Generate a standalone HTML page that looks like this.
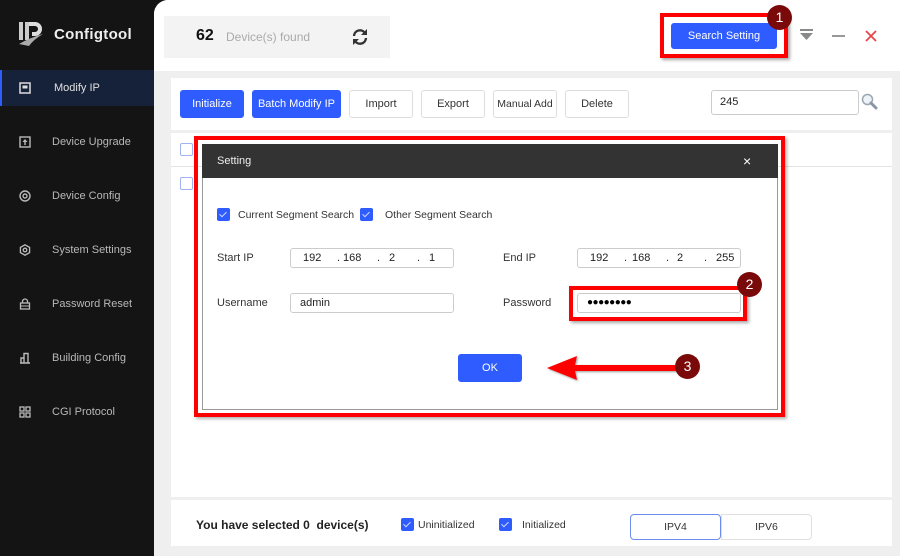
<!DOCTYPE html>
<html><head><meta charset="utf-8"><style>
*{margin:0;padding:0;box-sizing:border-box}
body{width:900px;height:556px;overflow:hidden;background:#141414;font-family:"Liberation Sans",sans-serif;position:relative;font-size:11px;color:#333}
.a{position:absolute}
.side{left:0;top:0;width:154px;height:556px;background:#141414}
.nav{left:0;width:154px;height:36px;color:#b8b8b8;font-size:11px;line-height:36px;padding-left:52px}
.nav .ic{position:absolute;left:19px;top:12px;width:12px;height:12px}
.main{left:154px;top:0;width:746px;height:556px;background:#efefef;border-top-left-radius:14px;overflow:hidden}
.btn{position:absolute;height:28px;border-radius:3px;font-size:11px;line-height:26px;text-align:center;border:1px solid #ddd;background:#fff;color:#333}
.btn.b{background:#2f5cff;border-color:#2f5cff;color:#fff}
.cb{position:absolute;width:13px;height:13px;background:#2f5cff;border-radius:2px}
.cb:after{content:"";position:absolute;left:4px;top:2px;width:3px;height:6px;border:solid #cfd8ff;border-width:0 1px 1px 0;transform:rotate(45deg)}
.cbe{position:absolute;width:13px;height:13px;border:1px solid #9fb3f0;border-radius:2px;background:#fff}
.inp{position:absolute;height:20px;border:1px solid #ccc;border-radius:3px;background:#fff;font-size:11px;line-height:18px;color:#222}
.inp span{top:0}
.red{position:absolute;border:4px solid #f00;box-shadow:2px 2px 3px rgba(0,0,0,.35)}
.num{position:absolute;width:25px;height:25px;border-radius:50%;background:#7a0a0a;color:#fff;font-size:14px;line-height:25px;text-align:center}
</style></head><body>
<div class="a side">
  <svg class="a" style="left:17px;top:20px" width="28" height="30" viewBox="0 0 28 30">
    <rect x="2" y="2" width="4" height="18" fill="#ccc"/><rect x="8" y="2" width="4" height="18" fill="#ccc"/>
    <path d="M12 2 h6 a7 7 0 0 1 0 14 h-3 v-4 h3 a3 3 0 0 0 0 -6 h-6z" fill="#ddd"/>
    <path d="M2 24 q10 -6 24 -10 q-10 6 -14 12 z" fill="#aaa"/>
  </svg>
  <div class="a" style="left:54px;top:26px;color:#eee;font-size:15px;font-weight:bold;letter-spacing:.3px">Configtool</div>
  <div class="a nav" style="top:70px;background:#16213a;border-left:2px solid #2f5cff;color:#e0e0e0"><svg class="ic" viewBox="0 0 12 12" style="left:17px"><rect x="1" y="1" width="10" height="10" fill="none" stroke="#ddd" stroke-width="1.5"/><rect x="3.5" y="3.5" width="5" height="3" fill="#ddd"/></svg>Modify IP</div>
  <div class="a nav" style="top:124px"><svg class="ic" viewBox="0 0 12 12"><rect x="1" y="1" width="10" height="10" fill="none" stroke="#bbb" stroke-width="1.4"/><path d="M6 3 L3.5 6 H8.5Z M5.3 6 h1.4 v3 h-1.4z" fill="#bbb"/></svg>Device Upgrade</div>
  <div class="a nav" style="top:178px"><svg class="ic" viewBox="0 0 12 12"><circle cx="6" cy="6" r="5" fill="none" stroke="#bbb" stroke-width="1.4"/><circle cx="6" cy="6" r="2" fill="none" stroke="#bbb" stroke-width="1.4"/></svg>Device Config</div>
  <div class="a nav" style="top:232px"><svg class="ic" viewBox="0 0 12 12"><path d="M6 .8 L10.6 3.4 V8.6 L6 11.2 L1.4 8.6 V3.4Z" fill="none" stroke="#bbb" stroke-width="1.3"/><circle cx="6" cy="6" r="1.8" fill="none" stroke="#bbb" stroke-width="1.3"/></svg>System Settings</div>
  <div class="a nav" style="top:286px"><svg class="ic" viewBox="0 0 12 12"><path d="M3.5 5 V3.5 a2.5 2.5 0 0 1 5 0 V5" fill="none" stroke="#bbb" stroke-width="1.3"/><rect x="1.5" y="5" width="9" height="6" fill="none" stroke="#bbb" stroke-width="1.3"/><path d="M1.5 8 h9" stroke="#bbb"/></svg>Password Reset</div>
  <div class="a nav" style="top:340px"><svg class="ic" viewBox="0 0 12 12"><path d="M1 11 h10 M2 11 V6 h3 v5 M5 11 V1.5 h4 V11" fill="none" stroke="#bbb" stroke-width="1.4"/></svg>Building Config</div>
  <div class="a nav" style="top:394px"><svg class="ic" viewBox="0 0 12 12"><g fill="none" stroke="#bbb" stroke-width="1.3"><rect x="1" y="1" width="4" height="4"/><rect x="7" y="1" width="4" height="4"/><rect x="1" y="7" width="4" height="4"/><rect x="7" y="7" width="4" height="4"/></g></svg>CGI Protocol</div>
</div>
<div class="a main">
  <div class="a" style="left:0;top:0;width:746px;height:71px;background:#fff"></div>
  <div class="a" style="left:10px;top:16px;width:226px;height:42px;background:#f3f3f3"></div>
  <div class="a" style="left:42px;top:27px;font-size:16px;font-weight:bold;color:#111">62</div>
  <div class="a" style="left:72px;top:30px;font-size:12px;color:#aaa">Device(s) found</div>
  <svg class="a" style="left:196px;top:27px" width="20" height="20" viewBox="0 0 20 20"><g fill="none" stroke="#333" stroke-width="2.4"><path d="M4 9 a6 6 0 0 1 11 -3"/><path d="M16 11 a6 6 0 0 1 -11 3"/></g><path d="M17 2 v6 h-6z" fill="#333"/><path d="M3 18 v-6 h6z" fill="#333"/></svg>
  <div class="a" style="left:17px;top:78px;width:721px;height:52px;background:#fff"></div>
  <div class="a" style="left:17px;top:133px;width:721px;height:364px;background:#fff"></div>
  <div class="a" style="left:17px;top:166px;width:721px;height:1px;background:#e3e3e3"></div>
  <div class="a" style="left:17px;top:500px;width:721px;height:46px;background:#fff"></div>
  <div class="cbe" style="left:26px;top:143px"></div>
  <div class="cbe" style="left:26px;top:177px"></div>
</div>
<div class="btn b" style="left:180px;top:90px;width:64px">Initialize</div>
<div class="btn b" style="left:252px;top:90px;width:89px">Batch Modify IP</div>
<div class="btn" style="left:349px;top:90px;width:64px">Import</div>
<div class="btn" style="left:421px;top:90px;width:64px">Export</div>
<div class="btn" style="left:493px;top:90px;width:64px;font-size:10.5px">Manual Add</div>
<div class="btn" style="left:565px;top:90px;width:64px">Delete</div>
<div class="inp" style="left:711px;top:90px;width:148px;height:25px;line-height:23px;padding-left:8px;font-size:11px">245</div>
<svg class="a" style="left:861px;top:93px" width="17" height="17" viewBox="0 0 17 17"><circle cx="6.5" cy="6.5" r="5" fill="#eef3f8" stroke="#9aa7b3" stroke-width="1.5"/><path d="M10 10 L15 15" stroke="#8a96a3" stroke-width="3" stroke-linecap="round"/></svg>
<div class="btn b" style="left:671px;top:23px;width:106px;height:26px;line-height:24px">Search Setting</div>
<div class="red" style="left:660px;top:13px;width:128px;height:45px"></div>
<div class="num" style="left:767px;top:5px">1</div>
<svg class="a" style="left:800px;top:29px" width="13" height="12" viewBox="0 0 13 12"><rect x="0" y="0" width="13" height="2" fill="#8a8a8a"/><path d="M0 4 h13 l-6.5 7z" fill="#8a8a8a"/></svg>
<div class="a" style="left:832px;top:35px;width:13px;height:2px;background:#999"></div>
<svg class="a" style="left:865px;top:30px" width="12" height="12" viewBox="0 0 12 12"><path d="M1 1 L11 11 M11 1 L1 11" stroke="#e84545" stroke-width="1.8"/></svg>
<div class="a" style="left:202px;top:144px;width:576px;height:266px;background:#fff;border:1px solid #999"></div>
<div class="a" style="left:202px;top:144px;width:576px;height:34px;background:#333;color:#eee;font-size:11px;line-height:34px;padding-left:15px">Setting</div>
<div class="a" style="left:743px;top:153px;color:#fff;font-size:14px">×</div>
<div class="red" style="left:194px;top:136px;width:591px;height:281px;box-shadow:2px 2px 3px rgba(0,0,0,.3)"></div>
<div class="cb" style="left:217px;top:208px"></div>
<div class="a" style="left:238px;top:209px;font-size:10.5px">Current Segment Search</div>
<div class="cb" style="left:360px;top:208px"></div>
<div class="a" style="left:385px;top:209px;font-size:10.5px">Other Segment Search</div>
<div class="a" style="left:217px;top:252px">Start IP</div>
<div class="inp" style="left:290px;top:248px;width:164px"><span class="a" style="left:12px">192</span><span class="a" style="left:46px">.</span><span class="a" style="left:52px">168</span><span class="a" style="left:86px">.</span><span class="a" style="left:98px">2</span><span class="a" style="left:126px">.</span><span class="a" style="left:138px">1</span></div>
<div class="a" style="left:503px;top:252px">End IP</div>
<div class="inp" style="left:577px;top:248px;width:164px"><span class="a" style="left:12px">192</span><span class="a" style="left:46px">.</span><span class="a" style="left:54px">168</span><span class="a" style="left:88px">.</span><span class="a" style="left:99px">2</span><span class="a" style="left:126px">.</span><span class="a" style="left:138px">255</span></div>
<div class="a" style="left:217px;top:297px">Username</div>
<div class="inp" style="left:290px;top:293px;width:164px;padding-left:9px">admin</div>
<div class="a" style="left:503px;top:297px">Password</div>
<div class="inp" style="left:577px;top:293px;width:164px;padding-left:9px;font-size:10px;letter-spacing:-0.5px;color:#000">●●●●●●●●</div>
<div class="red" style="left:569px;top:286px;width:178px;height:35px"></div>
<div class="num" style="left:737px;top:272px">2</div>
<div class="btn b" style="left:458px;top:354px;width:64px;height:28px;line-height:26px">OK</div>
<svg class="a" style="left:545px;top:354px" width="140" height="30" viewBox="0 0 140 30"><path d="M2 14 L32 2 L30 11 H135 V17 H30 L32 26Z" fill="#f00" style="filter:drop-shadow(1px 1px 1px rgba(0,0,0,.4))"/></svg>
<div class="num" style="left:675px;top:354px">3</div>
<div class="a" style="left:196px;top:518px;font-size:12px;font-weight:bold;color:#222">You have selected 0&nbsp; device(s)</div>
<div class="cb" style="left:401px;top:518px"></div>
<div class="a" style="left:418px;top:519px;font-size:10.5px">Uninitialized</div>
<div class="cb" style="left:499px;top:518px"></div>
<div class="a" style="left:522px;top:519px;font-size:10.5px">Initialized</div>
<div class="a" style="left:630px;top:514px;width:91px;height:26px;border:1px solid #6a8ef0;border-radius:4px;background:#fff;text-align:center;line-height:24px;font-size:10.5px">IPV4</div>
<div class="a" style="left:721px;top:514px;width:91px;height:26px;border:1px solid #e0e0e0;border-radius:0 4px 4px 0;background:#fff;text-align:center;line-height:24px;font-size:10.5px">IPV6</div>
</body></html>
